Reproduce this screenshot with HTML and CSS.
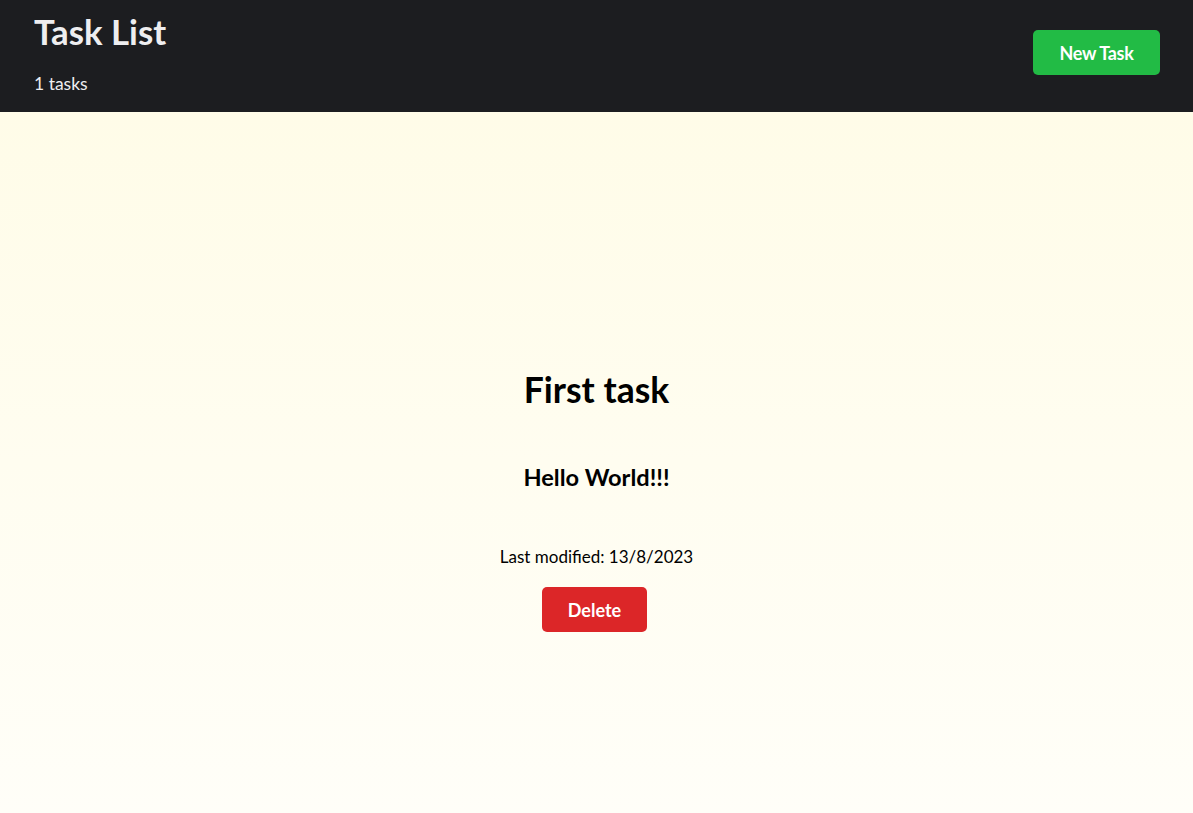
FILE: index.html
```html
<!DOCTYPE html>
<html>
<head>
<meta charset="utf-8">
<link rel="stylesheet" href="styles.css">
</head>
<body>
<header class="topbar">
  <div class="title-block">
    <h1 class="title">Task List</h1>
    <p class="count">1 tasks</p>
  </div>
  <button class="btn btn-new">New Task</button>
</header>
<main class="content">
  <section class="task">
    <h2 class="task-title">First task</h2>
    <h3 class="task-body">Hello World!!!</h3>
    <p class="task-date">Last modified: 13/8/2023</p>
    <button class="btn btn-delete">Delete</button>
  </section>
</main>
</body>
</html>
```
FILE: styles.css
```css
* { box-sizing: border-box; }
html, body { margin: 0; padding: 0; height: 100%; }
body {
  font-family: Lato, "Open Sans", sans-serif;
  display: flex;
  flex-direction: column;
  background: #fffef8;
}
.topbar {
  height: 112px;
  background: #1c1d20;
  color: #eeeef0;
  display: flex;
  justify-content: space-between;
  align-items: flex-start;
  padding: 0 33px 0 34px;
}
.title-block { padding-top: 10px; }
.title {
  margin: 0;
  font-size: 34.8px;
  font-weight: 700;
  line-height: 44px;
}
.count {
  margin: 18px 0 0;
  font-size: 17.5px;
  line-height: 24px;
}
.btn {
  font-family: inherit;
  font-weight: 700;
  font-size: 18px;
  color: #fff;
  border: none;
  border-radius: 5px;
  cursor: pointer;
}
.btn-new {
  margin-top: 30px;
  width: 127px;
  height: 45px;
  background: #22bb45;
  letter-spacing: -0.3px;
}
.content {
  flex: 1;
  background: linear-gradient(to bottom, #fffce8 0%, #fffef8 100%);
  display: flex;
  justify-content: center;
  padding-top: 256px;
}
.task {
  display: flex;
  flex-direction: column;
  align-items: center;
}
.task-title {
  margin: 0;
  font-size: 35.5px;
  font-weight: 700;
  line-height: 44px;
  color: #000;
}
.task-body {
  margin: 50px 0 0;
  font-size: 23.6px;
  font-weight: 700;
  line-height: 30px;
  color: #000;
}
.task-date {
  margin: 53px 0 0;
  font-size: 17px;
  line-height: 24px;
  color: #000;
}
.btn-delete {
  margin-top: 18px;
  width: 105px;
  height: 45px;
  background: #dc2628;
  transform: translateX(-2px);
}
```
